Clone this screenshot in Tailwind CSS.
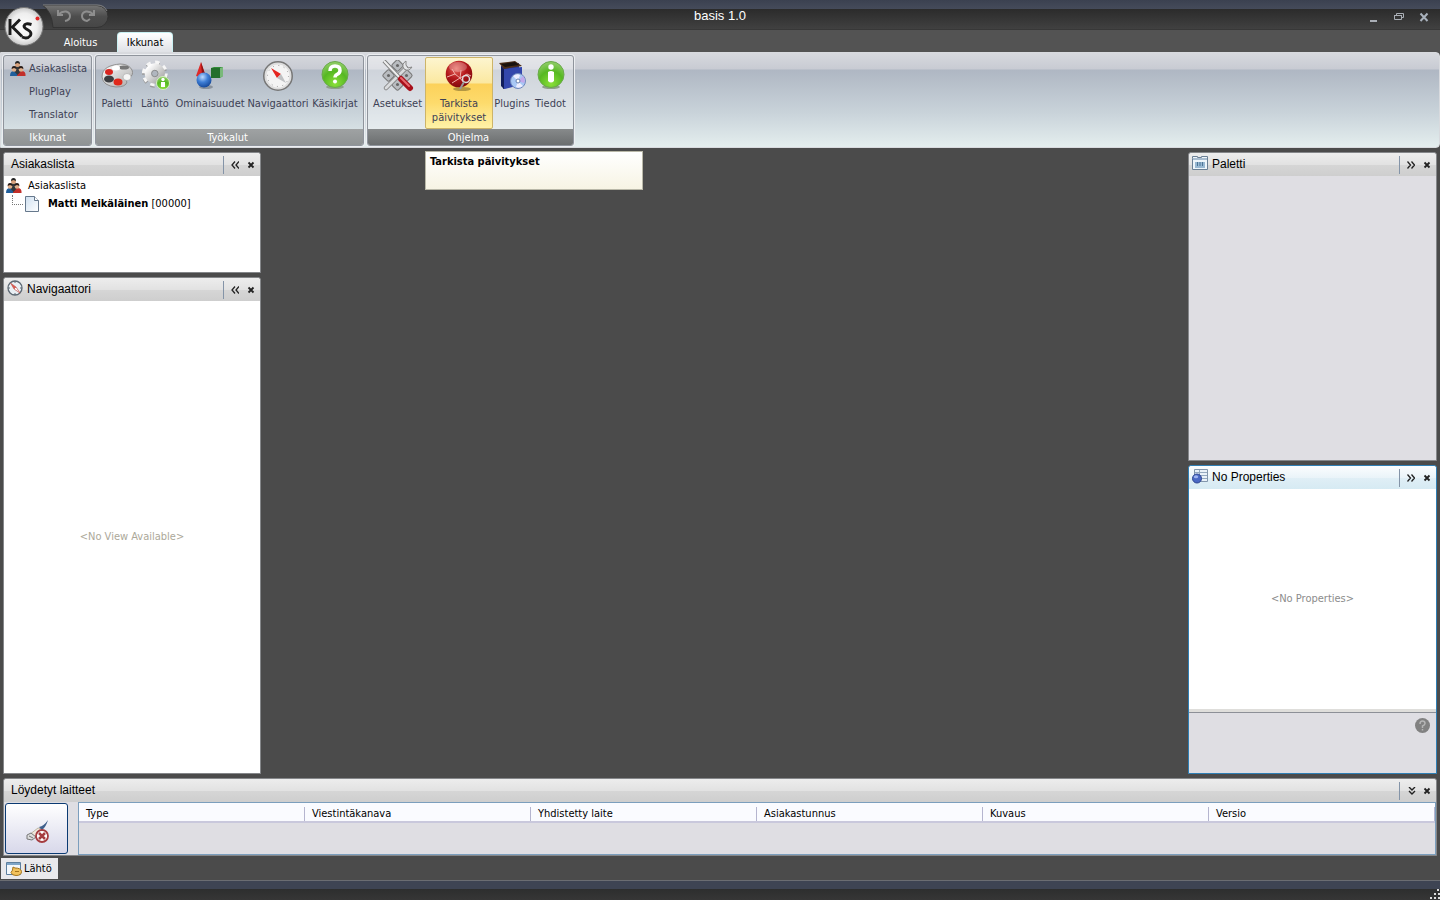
<!DOCTYPE html>
<html lang="fi">
<head>
<meta charset="utf-8">
<title>basis 1.0</title>
<script src="https://cdn.jsdelivr.net/npm/@tailwindcss/browser@4"></script>
</head>
<body class="flex h-screen flex-col overflow-hidden bg-[#4b4b4b] font-['DejaVu_Sans_Condensed','DejaVu_Sans',sans-serif] text-[11px] leading-[14px] text-black">
<svg class="absolute size-0" aria-hidden="true">
  <defs>
    <radialGradient id="gGreen" cx=".5" cy=".85" r=".8"><stop offset="0" stop-color="#8be03a"/><stop offset=".6" stop-color="#56b822"/><stop offset="1" stop-color="#8ccb62"/></radialGradient>
    <radialGradient id="gRed" cx=".4" cy=".3" r=".75"><stop offset="0" stop-color="#e86a60"/><stop offset=".5" stop-color="#b3181b"/><stop offset="1" stop-color="#7c080c"/></radialGradient>
    <radialGradient id="gBlue" cx=".4" cy=".3" r=".7"><stop offset="0" stop-color="#c0dcff"/><stop offset=".5" stop-color="#3f7fd6"/><stop offset="1" stop-color="#174a9c"/></radialGradient>
    <linearGradient id="gSilver" x2="1" y2="1"><stop offset="0" stop-color="#fff"/><stop offset="1" stop-color="#a9a9a9"/></linearGradient>
    <linearGradient id="gDoc" y2="1" x2="1"><stop offset="0" stop-color="#cfe0f0"/><stop offset="1" stop-color="#fff"/></linearGradient>
  </defs>
  <symbol id="people" viewBox="0 0 16 16">
    <path d="M0 15q0-5 4-5t4 5z" fill="#1f5f9c"/><path d="M7 15q0-5 4.500-5t4 5z" fill="#c22f2a"/>
    <path d="M3 9q0-4 4.500-4t4.500 4l-4.500 5z" fill="#33383c"/>
    <circle cx="7.500" cy="3.500" r="2.500" fill="#d9a27c"/><path d="M5 3q0-3 2.500-3T10 3L7.500 2z" fill="#222"/>
    <circle cx="4" cy="8.500" r="2.300" fill="#e0b08c"/><path d="M1.600 8q0-3 2.400-3t2.400 3L4 7z" fill="#2a1c18"/>
    <circle cx="11" cy="8.500" r="2.300" fill="#e0b08c"/><path d="M8.600 8q0-3 2.400-3t2.400 3L11 7z" fill="#2a1c18"/>
  </symbol>
  <symbol id="close" viewBox="0 0 8 8"><path d="M1.500 1.500l5 5m0-5l-5 5" stroke="#222" stroke-width="1.800"/></symbol>
  <symbol id="left" viewBox="0 0 8 8"><path d="M4 .5L1 4l3 3.500M8 .5L5 4l3 3.500" fill="none" stroke="#222" stroke-width="1.300"/></symbol>
  <symbol id="right" viewBox="0 0 8 8"><path d="M.5 .5l3 3.500-3 3.500M4.500 .5l3 3.500-3 3.500" fill="none" stroke="#222" stroke-width="1.300"/></symbol>
  <symbol id="down" viewBox="0 0 8 8"><path d="M1 0l3 3 3-3M1 4l3 3 3-3" fill="none" stroke="#222" stroke-width="1.400"/></symbol>
</svg>

<header class="relative flex-none">
  <div class="h-[9px] bg-linear-to-b from-[#3b4150] to-[#454b5a]"></div>
  <div class="flex h-[20px] items-start justify-end bg-linear-to-b from-[#2b2b2b] to-[#414141] pr-1">
    <div class="flex">
      <button aria-label="Pienennä" class="h-4 w-[25px]"><svg class="mx-auto size-3" viewBox="0 0 12 12"><path d="M2 9h7v2H2z" fill="#a9aeb5"/></svg></button>
      <button aria-label="Palauta" class="h-4 w-[25px]"><svg class="mx-auto size-3" viewBox="0 0 12 12" fill="none" stroke="#a9aeb5"><path d="M3.500 4.500V2.500h7v4H9M1.500 4.500h7v4h-7zM1 4.500h8"/></svg></button>
      <button aria-label="Sulje" class="h-4 w-[25px]"><svg class="mx-auto size-3" viewBox="0 0 12 12"><path d="M2.500 2.500l7 7.500m0-7.500l-7 7.500" stroke="#a9b2bd" stroke-width="2"/></svg></button>
    </div>
  </div>
  <h1 class="absolute inset-x-0 top-2 text-center font-['Liberation_Sans',sans-serif] text-[13px] leading-4 text-white">basis 1.0</h1>
  <nav class="flex h-[23px] items-end border-t border-[#383838] bg-[#535353] pl-[45px]">
    <button class="h-5 w-[71px] pt-0.5 text-white">Aloitus</button>
    <button class="ml-px h-5 w-[56px] rounded-t border border-b-0 border-[#c9f0f2] bg-linear-to-b from-white to-[#dfe1e6] pt-px">Ikkunat</button>
  </nav>
  <svg class="absolute top-1 left-[42px] h-6 w-[70px]" viewBox="0 0 70 24">
    <defs><linearGradient id="gq" x2="0" y2="1"><stop stop-color="#747474"/><stop offset=".5" stop-color="#4d4d4d"/><stop offset="1" stop-color="#464646"/></linearGradient></defs>
    <path d="M1 1.500h54a11 11 0 0 1 0 22H11Q10 8 1 1.500z" fill="url(#gq)" stroke="#333"/>
    <path d="M1 1h54a11 11 0 0 1 10 6" fill="none" stroke="#858585"/>
  </svg>
  <button aria-label="Kumoa" class="absolute top-2 left-14 size-4"><svg viewBox="0 0 16 16" fill="none" stroke="#8e8e8e" stroke-width="2"><path d="M2 2v5h5M2.500 6.500Q6 3 10 3.500q4 1 4 4.500 0 4-5 5"/></svg></button>
  <button aria-label="Tee uudelleen" class="absolute top-2 left-20 size-4"><svg viewBox="0 0 16 16" fill="none" stroke="#8e8e8e" stroke-width="2"><path d="M14 2v5H9M13.500 6.500Q10 3 6 3.500q-4 1-4 4.500 0 4 5 5l3-2"/></svg></button>
  <button aria-label="KS-valikko" class="absolute top-[6px] left-1 z-10 size-10"><svg viewBox="0 0 40 40">
    <defs><radialGradient id="gks"><stop stop-color="#fff"/><stop offset=".7" stop-color="#eee"/><stop offset="1" stop-color="#c9c9c9"/></radialGradient></defs>
    <circle cx="20" cy="20.500" r="19" fill="url(#gks)" stroke="#777"/>
    <path d="M6 13v16M16 13.500L8.500 21l9.500 9.500M27.500 18.500q-6.500-2-7.500 1.500 0 2 4 4 4 2 2.500 5.500-3 4-8.500 1.500" fill="none" stroke="#1c1c1c" stroke-width="2.900"/>
    <circle cx="33.500" cy="12.500" r="2" fill="#e02626"/></svg></button>
</header>

<section aria-label="Ikkunat" class="mb-[4px] flex h-24 flex-none gap-[3px] rounded-r border border-[#d8dade] bg-[linear-gradient(#d7d9de_0,#c8cbd3_16px,#afb7c3_17px,#c9d3da_60px,#e4eeee_94px)] px-[2px] pt-[2px] pb-px">
  <div class="flex w-[89px] flex-col overflow-hidden rounded-[3px] border border-[#8f949c] shadow-[0_0_0_1px_#eceef1] text-[#3d4155]">
    <div class="flex flex-1 flex-col px-[6px] pt-px">
      <button class="flex h-[23px] items-center gap-[3px]"><svg class="size-4 flex-none"><use href="#people"/></svg>Asiakaslista</button>
      <button class="h-[23px] pl-[19px] text-left">PlugPlay</button>
      <button class="h-[23px] pl-[19px] text-left">Translator</button>
    </div>
    <h2 class="h-4 bg-linear-to-b from-[#9fa2a3] to-[#8f9394] text-center leading-[18px] text-white">Ikkunat</h2>
  </div>
  <div class="flex w-[269px] flex-col overflow-hidden rounded-[3px] border border-[#8f949c] shadow-[0_0_0_1px_#eceef1] text-[#3d4155]">
    <div class="flex flex-1 px-[2px] pt-px">
      <button class="flex w-[38px] flex-col items-center gap-[5px] whitespace-nowrap pt-[3px]">
        <svg class="size-8 flex-none" viewBox="0 0 32 32"><path d="M1 17C1 8 9 5 19 4q9 0 12 6 2 5-3 8-5 1-2 4-1 5-11 5Q2 26 1 17z" fill="url(#gSilver)" stroke="#8e8e8e"/><ellipse cx="23" cy="7.500" rx="5" ry="2" fill="#777"/><ellipse cx="15" cy="8" rx="4" ry="2.500" fill="#fff"/><ellipse cx="8" cy="12" rx="4" ry="3" fill="#d8241e"/><ellipse cx="8" cy="19" rx="5" ry="3.500" fill="#3b3d40"/><ellipse cx="17" cy="22" rx="4.500" ry="3.500" fill="#e0291b"/><ellipse cx="26" cy="17" rx="4" ry="3.500" fill="#f6f6f6" stroke="#999" stroke-width=".5"/></svg>Paletti</button>
      <button class="flex w-[38px] flex-col items-center gap-[5px] whitespace-nowrap pt-[3px]">
        <svg class="size-8 flex-none" viewBox="0 0 32 32"><g transform="translate(2 2) scale(.92)"><circle cx="15" cy="14" r="12" fill="none" stroke="#9a9a9a" stroke-width="4" stroke-dasharray="4.700 4.720"/><circle cx="15" cy="12.500" r="12" fill="none" stroke="#f6f6f6" stroke-width="4" stroke-dasharray="4.700 4.720"/><circle cx="15" cy="12.500" r="7.300" fill="none" stroke="url(#gSilver)" stroke-width="7.500"/><circle cx="15" cy="12.500" r="3.500" fill="#b0b6bf" stroke="#888"/></g><circle cx="24" cy="23" r="6.500" fill="url(#gGreen)" stroke="#d3efc0"/><circle cx="24" cy="19.500" r="1.700" fill="#fff"/><path d="M22 22h4v5h-4z" fill="#fff"/></svg>Lähtö</button>
      <button class="flex w-[72px] flex-col items-center gap-[5px] whitespace-nowrap pt-[3px]">
        <svg class="size-8 flex-none" viewBox="0 0 32 32"><path d="M7 2L2 16q5 2 9-2z" fill="#df2927"/><path d="M7 2l1 13 3-1z" fill="#8f1212"/><path d="M17 8l3-1h9v9l-3 2h-9z" fill="#328c38"/><path d="M17 8h9v10h-9z" fill="#236e2b"/><path d="M26 8l3-1v9l-3 2z" fill="#79b97a"/><ellipse cx="12" cy="27" rx="7" ry="2" fill="#8a929c"/><circle cx="10" cy="20" r="7.500" fill="url(#gBlue)"/></svg>Ominaisuudet</button>
      <button class="flex w-[64px] flex-col items-center gap-[5px] whitespace-nowrap pt-[3px]">
        <svg class="size-8 flex-none" viewBox="0 0 32 32"><circle cx="16" cy="16" r="14" fill="#f4f4f4" stroke="#777" stroke-width="2"/><circle cx="16" cy="16" r="12.500" fill="none" stroke="#ddd" stroke-width="2"/><circle cx="16" cy="16" r="10.500" fill="none" stroke="#999" stroke-dasharray="1 4.500"/><path d="M9 8l10 6-4 4z" fill="#e52620"/><path d="M19 14l5 9-9-5z" fill="#bfc1c3"/></svg>Navigaattori</button>
      <button class="flex w-[50px] flex-col items-center gap-[5px] whitespace-nowrap pt-[3px]">
        <svg class="size-8 flex-none" viewBox="0 0 32 32"><ellipse cx="16" cy="27" rx="9" ry="2" fill="#8fa08a"/><circle cx="16" cy="14.500" r="13" fill="url(#gGreen)" stroke="#69a94b"/><path d="M11 11q0-5 5-5t5 4.500q0 2.500-3 4-2 1-2 3" fill="none" stroke="#fff" stroke-width="3.500"/><circle cx="16" cy="21.500" r="2" fill="#fff"/></svg>Käsikirjat</button>
    </div>
    <h2 class="h-4 bg-linear-to-b from-[#9fa2a3] to-[#8f9394] pr-1 text-center leading-[18px] text-white">Työkalut</h2>
  </div>
  <div class="flex w-[207px] flex-col overflow-hidden rounded-[3px] border border-[#8f949c] bg-white/40 shadow-[0_0_0_1px_#eceef1] text-[#3d4155]">
    <div class="flex flex-1 px-[2px] pt-px">
      <button class="flex w-[55px] flex-col items-center gap-[5px] whitespace-nowrap pt-[3px]">
        <svg class="size-8 flex-none" viewBox="0 0 32 32"><g fill="#b9bcc0" stroke="#777"><rect x="11" y="1" width="9" height="9" rx="2" transform="rotate(45 15.500 5.500)"/><rect x="2" y="11" width="9" height="9" rx="2" transform="rotate(45 6.500 15.500)"/><rect x="20" y="11" width="9" height="9" rx="2" transform="rotate(45 24.500 15.500)"/><rect x="11" y="20" width="9" height="9" rx="2" transform="rotate(45 15.500 24.500)"/></g><g fill="#666"><circle cx="15.500" cy="5.500" r="1.500"/><circle cx="6.500" cy="15.500" r="1.500"/><circle cx="24.500" cy="15.500" r="1.500"/><circle cx="15.500" cy="24.500" r="1.500"/></g><path d="M4 28L24 8" stroke="#777" stroke-width="4.500" stroke-linecap="round"/><path d="M4 28L24 8" stroke="#dadcde" stroke-width="3" stroke-linecap="round"/><path d="M24 1q-5 3-2 8 5 3 8-2l-4 1-2-3z" fill="#e5e6e8" stroke="#888"/><path d="M2 1l16 17" stroke="#777" stroke-width="4"/><path d="M2 1l16 17" stroke="#eee" stroke-width="2"/><path d="M19 19l9 9" stroke="#a8101c" stroke-width="6" stroke-linecap="round"/><path d="M19 18l8 8" stroke="#e86a70" stroke-width="2" stroke-linecap="round"/></svg>Asetukset</button>
      <button class="flex w-[68px] flex-col items-center gap-[5px] rounded-[2px] border border-[#cdb468] bg-[linear-gradient(#fdf5cf_0,#fbe8a0_25px,#fcd15a_26px,#fddb6c_45px,#fff2a8_70px)] pt-[2px]">
        <svg class="size-8 flex-none" viewBox="0 0 32 32"><ellipse cx="19" cy="29" rx="9" ry="2" fill="#b39742"/><circle cx="16" cy="14" r="13.300" fill="url(#gRed)"/><ellipse cx="15" cy="7" rx="9" ry="5" fill="#fff" opacity=".25"/><path d="M4 17l8-3 5 4 7-4 4 2M12 14l-3-5M9 23l8-5 1-8M17 18l4 5" fill="none" stroke="#f0b0aa"/><circle cx="23" cy="19" r="3.500" fill="none" stroke="#ddd" stroke-width="1.500"/><path d="M21 22l-4 7" stroke="#999" stroke-width="2"/></svg><span class="w-full">Tarkista päivitykset</span></button>
      <button class="flex w-[38px] flex-col items-center gap-[5px] whitespace-nowrap pt-[3px]">
        <svg class="size-8 flex-none" viewBox="0 0 32 32"><path d="M5 6l18-3v22L7 29z" fill="#28378f"/><path d="M5 6l3 3v20l-3-3z" fill="#111d5c"/><path d="M8 9l18-2v18L8 29z" fill="#3347ac"/><path d="M3 3l16-2 7 5L8 9z" fill="#4b2d18"/><path d="M5 4l14-2 4 3L9 7z" fill="#19120e"/><circle cx="22" cy="21" r="7.500" fill="#a9c8f5" stroke="#7087bb"/><path d="M22 21l-5-5q4-3 7-1zM22 21l5 5q-4 3-7 1z" fill="#eef"/><path d="M22 21l5-5q3 4 1 7z" fill="#c1a8ea"/><circle cx="22" cy="21" r="2" fill="#fff" stroke="#6680b0"/></svg>Plugins</button>
      <button class="flex w-[39px] flex-col items-center gap-[5px] whitespace-nowrap pt-[3px]">
        <svg class="size-8 flex-none" viewBox="0 0 32 32"><ellipse cx="16" cy="27" rx="9" ry="2" fill="#8fa08a"/><circle cx="16" cy="14.500" r="13" fill="url(#gGreen)" stroke="#69a94b"/><circle cx="16" cy="7" r="2.700" fill="#fff"/><path d="M13 12q3-2 6 0v9q-3 3-6 0z" fill="#fff"/></svg>Tiedot</button>
    </div>
    <h2 class="h-4 bg-linear-to-b from-[#878a8b] to-[#6b6e6f] pr-1 text-center leading-[18px] text-white">Ohjelma</h2>
  </div>
</section>

<main class="relative flex min-h-0 flex-1 flex-col gap-1 px-[3px]">
  <div role="tooltip" class="absolute -top-px left-[425px] h-[39px] w-[218px] border border-[#b9b8a8] bg-linear-to-b from-white to-[#f7f4e4] px-1 pt-[3px] font-bold">Tarkista päivitykset</div>
  <div class="flex min-h-0 flex-1 justify-between">
    <div class="flex w-[258px] flex-col gap-1">
      <section class="flex h-[121px] flex-col rounded-t-[3px] border border-[#85878a] bg-white">
        <header class="flex h-[23px] flex-none items-center rounded-t-[3px] bg-[linear-gradient(#ededed_0,#e2e2e2_50%,#d6d6d6_51%,#cecece)] pr-[5px] pl-[7px]">
          <h2 class="flex-1 pb-0.5 font-['Liberation_Sans',sans-serif] text-[12px]">Asiakaslista</h2>
          <span class="mr-[7px] h-[18px] w-px bg-[#8494a8]"></span>
          <button aria-label="Piilota" class="mr-2"><svg class="size-2"><use href="#left"/></svg></button>
          <button aria-label="Sulje"><svg class="size-2"><use href="#close"/></svg></button>
        </header>
        <ul class="pt-px pl-[2px]">
          <li><span class="flex h-[18px] items-center gap-[6px]"><svg class="size-4"><use href="#people"/></svg>Asiakaslista</span>
            <ul><li class="flex h-[18px] items-center"><span class="mb-2 ml-[6px] h-[10px] w-[11px] border-b border-l border-dotted border-[#777]"></span>
              <svg class="ml-[2px] h-4 w-[14px]" viewBox="0 0 14 16"><path d="M.5.500h9l4 4v11H.5z" fill="url(#gDoc)" stroke="#66788c"/><path d="M9.500.500v4h4" fill="#fff" stroke="#66788c"/></svg>
              <span class="ml-[9px]"><b>Matti Meikäläinen</b> [00000]</span></li></ul></li>
        </ul>
      </section>
      <section class="flex min-h-0 flex-1 flex-col rounded-t-[3px] border border-[#85878a] bg-white">
        <header class="flex h-[23px] flex-none items-center rounded-t-[3px] bg-[linear-gradient(#ededed_0,#e2e2e2_50%,#d6d6d6_51%,#cecece)] pr-[5px] pl-[3px]">
          <svg class="mr-1 mb-[3px] size-4" viewBox="0 0 16 16"><circle cx="8" cy="8" r="7" fill="#e9eff4" stroke="#5c6873" stroke-width="1.300"/><path d="M8 1v2m0 10v2M1 8h2m10 0h2" stroke="#5c6873"/><path d="M3.500 3L9 7 7 9z" fill="#e05a50" stroke="#b34a44" stroke-width=".5"/><path d="M9 7l4 6-6-4z" fill="#fff" stroke="#c0504a" stroke-width=".7"/></svg>
          <h2 class="flex-1 pb-0.5 font-['Liberation_Sans',sans-serif] text-[12px]">Navigaattori</h2>
          <span class="mr-[7px] h-[18px] w-px bg-[#8494a8]"></span>
          <button aria-label="Piilota" class="mr-2"><svg class="size-2"><use href="#left"/></svg></button>
          <button aria-label="Sulje"><svg class="size-2"><use href="#close"/></svg></button>
        </header>
        <p class="flex flex-1 items-center justify-center text-[#aca899]">&lt;No View Available&gt;</p>
      </section>
    </div>
    <div class="flex w-[249px] flex-col gap-1">
      <section class="flex flex-1 flex-col rounded-t-[3px] border border-[#85878a] bg-[#dfdee3]">
        <header class="flex h-[23px] flex-none items-center rounded-t-[3px] bg-[linear-gradient(#ededed_0,#e2e2e2_50%,#d6d6d6_51%,#cecece)] pr-[5px] pl-[3px]">
          <svg class="mr-1 mb-[3px] size-4" viewBox="0 0 16 16"><path d="M.5 3.500V1.500h5v1h4v-1h6v13H.5z" fill="#eef5fa" stroke="#6a7f94"/><path d="M1 3h14v2H1z" fill="#a8bccf"/><path d="M3 7h10v6H3z" fill="#98b8d2"/><path d="M5.500 7v4m2.500-4v4m2.500-4v4" stroke="#4d7596"/></svg>
          <h2 class="flex-1 pb-0.5 font-['Liberation_Sans',sans-serif] text-[12px]">Paletti</h2>
          <span class="mr-[7px] h-[18px] w-px bg-[#8494a8]"></span>
          <button aria-label="Piilota" class="mr-2"><svg class="size-2"><use href="#right"/></svg></button>
          <button aria-label="Sulje"><svg class="size-2"><use href="#close"/></svg></button>
        </header>
      </section>
      <section class="flex flex-1 flex-col rounded-t-[3px] border border-[#2f7fb5] bg-white">
        <header class="flex h-[23px] flex-none items-center rounded-t-[3px] bg-[linear-gradient(#fbfdfe_0,#eaf4f9_50%,#e0eff6_51%,#d6eaf3)] pr-[5px] pl-[3px]">
          <svg class="mr-1 mb-[3px] size-4" viewBox="0 0 16 16"><path d="M2.500 1.500h13v12h-13z" fill="#e9f1f8" stroke="#8296ac"/><path d="M3 4.500h12m-12 3h12m-12 3h12M7.500 2v11" stroke="#94a9bf"/><circle cx="5" cy="10.500" r="4.500" fill="#4a68c4" stroke="#2e4690"/><ellipse cx="4" cy="8.700" rx="2.200" ry="1.500" fill="#9fb4f0"/></svg>
          <h2 class="flex-1 pb-0.5 font-['Liberation_Sans',sans-serif] text-[12px]">No Properties</h2>
          <span class="mr-[7px] h-[18px] w-px bg-[#8494a8]"></span>
          <button aria-label="Piilota" class="mr-2"><svg class="size-2"><use href="#right"/></svg></button>
          <button aria-label="Sulje"><svg class="size-2"><use href="#close"/></svg></button>
        </header>
        <p class="flex flex-1 items-center justify-center text-[#8c8c8c]">&lt;No Properties&gt;</p>
        <div class="h-1 border-b border-[#8d9097] bg-[#dfdedb]"></div>
        <div class="h-[60px] bg-[#dfdee3] px-[6px] pt-[5px] text-right"><button aria-label="Ohje" class="size-[15px]"><svg viewBox="0 0 15 15"><circle cx="7.500" cy="7.500" r="7.500" fill="#818181"/><path d="M5 6q0-3 2.500-3T10 5.500q0 1.500-2.500 2.500v2M7.500 11v1.500" fill="none" stroke="#b5b5b5" stroke-width="1.500"/></svg></button></div>
      </section>
    </div>
  </div>
  <section class="flex h-[78px] flex-none flex-col rounded-t-[3px] border border-[#85878a] bg-[#dfdee3]">
    <header class="flex h-[23px] flex-none items-center rounded-t-[3px] bg-[linear-gradient(#ededed_0,#e2e2e2_50%,#d6d6d6_51%,#cecece)] pr-[5px] pl-[7px]">
      <h2 class="flex-1 pb-0.5 font-['Liberation_Sans',sans-serif] text-[12px]">Löydetyt laitteet</h2>
      <span class="mr-[8px] h-[18px] w-px bg-[#8494a8]"></span>
      <button aria-label="Piilota" class="mr-[7px]"><svg class="size-2"><use href="#down"/></svg></button>
      <button aria-label="Sulje"><svg class="size-2"><use href="#close"/></svg></button>
    </header>
    <div class="flex flex-1 gap-[10px] pl-px">
      <button aria-label="Katkaise yhteys" class="mt-px mb-px flex w-[63px] flex-none items-center justify-center rounded-[3px] border border-[#0b3a72] bg-linear-to-b from-white to-[#d8d8ea]">
        <svg class="mt-1 ml-1 size-7" viewBox="0 0 28 28"><path d="M4 18l9-7 5 1-6 9z" fill="#eee8dc" stroke="#bdb5a5"/><path d="M14 10q5-1 9-7-2 7-6 10z" fill="#3e5f8c"/><path d="M2 18l4-2 5 4-4 3-5-1z" fill="#ddd" stroke="#777"/><path d="M4 19l4 2" stroke="#777"/><circle cx="17" cy="19" r="6" fill="#fff" stroke="#a53c40" stroke-width="1.800"/><path d="M14 16l6 6m0-6l-6 6" stroke="#a53c40" stroke-width="2.500"/></svg>
      </button>
      <div class="flex-1 border border-[#7b9ebd]">
        <table class="w-full table-fixed border-collapse">
          <thead><tr class="h-[19px] border-b-2 border-[#c9c8dc] bg-[#fafbff] text-left">
            <th class="p-0 pt-[3px] font-normal"><div class="border-r border-[#b5b5cf] pl-[7px]">Type</div></th>
            <th class="p-0 pt-[3px] font-normal"><div class="border-r border-[#b5b5cf] pl-[7px]">Viestintäkanava</div></th>
            <th class="p-0 pt-[3px] font-normal"><div class="border-r border-[#b5b5cf] pl-[7px]">Yhdistetty laite</div></th>
            <th class="p-0 pt-[3px] font-normal"><div class="border-r border-[#b5b5cf] pl-[7px]">Asiakastunnus</div></th>
            <th class="p-0 pt-[3px] font-normal"><div class="border-r border-[#b5b5cf] pl-[7px]">Kuvaus</div></th>
            <th class="p-0 pt-[3px] font-normal"><div class="border-r border-[#b5b5cf] pl-[7px]">Versio</div></th>
          </tr></thead>
        </table>
      </div>
    </div>
  </section>
</main>
<footer class="flex-none">
  <div class="flex h-6 items-start pt-[2px] pl-px">
    <button class="flex h-[21px] items-center gap-[2px] bg-[#e9e9ec] pr-[6px] pl-[5px]"><svg class="size-4" viewBox="0 0 16 16"><path d="M.5 1.500h14v12H.5z" fill="#f3f8fc" stroke="#5d7f9e"/><path d="M1 2h13v2H1z" fill="#7fa6c8"/><path d="M7 6l2 1q6 0 6.500 3.500 0 4-5.500 4-4 0-5-3 2-2 2-5.500z" fill="#f2c25c" stroke="#a4741c"/><path d="M9 10.500h4" stroke="#a4741c"/></svg>Lähtö</button>
  </div>
  <div class="h-[9px] border-t border-[#6b6d72] bg-[#3e4453]"></div>
  <div class="flex h-[11px] items-end justify-end bg-linear-to-b from-[#2d2e2e] to-[#363636]"><svg class="size-3 flex-none" viewBox="0 0 12 12" fill="#ddd"><path d="M9 1h2v2H9zM6 5h2v2H6zM10 5h2v2h-2zM2 9h2v2H2zM6 9h2v2H6zM10 9h2v2h-2z"/></svg></div>
</footer>
</body>
</html>
